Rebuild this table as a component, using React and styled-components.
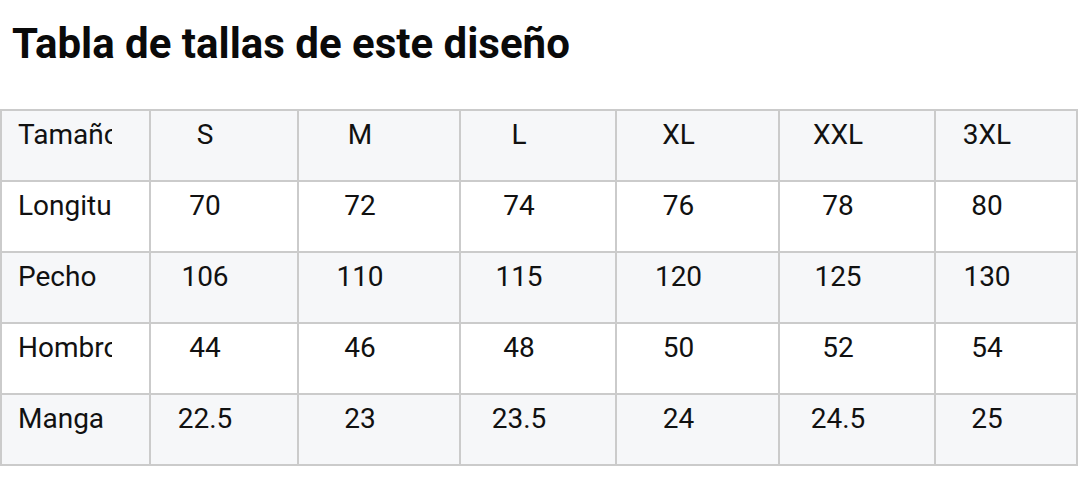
import styled, { createGlobalStyle } from 'styled-components'

const GlobalStyle = createGlobalStyle`
  body {
    margin: 0;
    background: #ffffff;
    font-family: Roboto, "Noto Sans", sans-serif;
    color: #111111;
  }
`

const sizes = ['S', 'M', 'L', 'XL', 'XXL', '3XL']

const rows = [
  { label: 'Longitud', values: [70, 72, 74, 76, 78, 80] },
  { label: 'Pecho', values: [106, 110, 115, 120, 125, 130] },
  { label: 'Hombro', values: [44, 46, 48, 50, 52, 54] },
  { label: 'Manga', values: [22.5, 23, 23.5, 24, 24.5, 25] },
]

const colWidths = [149, 148, 162, 156, 163, 156, 142]

export default function App() {
  return (
    <Page>
      <GlobalStyle />
      <Title>Tabla de tallas de este diseño</Title>
      <SizeTable>
        <colgroup>
          {colWidths.map((w, i) => (
            <col key={i} style={{ width: w }} />
          ))}
        </colgroup>
        <tbody>
          <Row $shaded>
            <LabelCell>
              <Clip>Tamaño</Clip>
            </LabelCell>
            {sizes.map((s) => (
              <Cell key={s}>{s}</Cell>
            ))}
          </Row>
          {rows.map((r, i) => (
            <Row key={r.label} $shaded={i % 2 === 1}>
              <LabelCell>
                <Clip>{r.label}</Clip>
              </LabelCell>
              {r.values.map((v, j) => (
                <Cell key={j}>{v}</Cell>
              ))}
            </Row>
          ))}
        </tbody>
      </SizeTable>
    </Page>
  )
}

const Page = styled.div`
  padding-top: 18px;
`

const Title = styled.h1`
  margin: 0 0 39px 12px;
  font-size: 42px;
  line-height: 52px;
  font-weight: 700;
  color: #0a0a0a;
  letter-spacing: 0;
`

const SizeTable = styled.table`
  table-layout: fixed;
  width: 1076px;
  border-collapse: collapse;
  border: 2px solid #cbcbcb;
`

const Row = styled.tr`
  height: 71px;
  background: ${(p) => (p.$shaded ? '#f6f7f9' : '#ffffff')};
`

const Cell = styled.td`
  border: 2px solid #cbcbcb;
  vertical-align: top;
  padding: 7px 54px 0 16px;
  text-align: center;
  font-size: 28px;
  line-height: 34px;
  white-space: nowrap;
`

const LabelCell = styled(Cell)`
  text-align: left;
  padding: 7px 0 0 16px;
`

const Clip = styled.div`
  width: 94px;
  overflow: hidden;
  white-space: nowrap;
`
